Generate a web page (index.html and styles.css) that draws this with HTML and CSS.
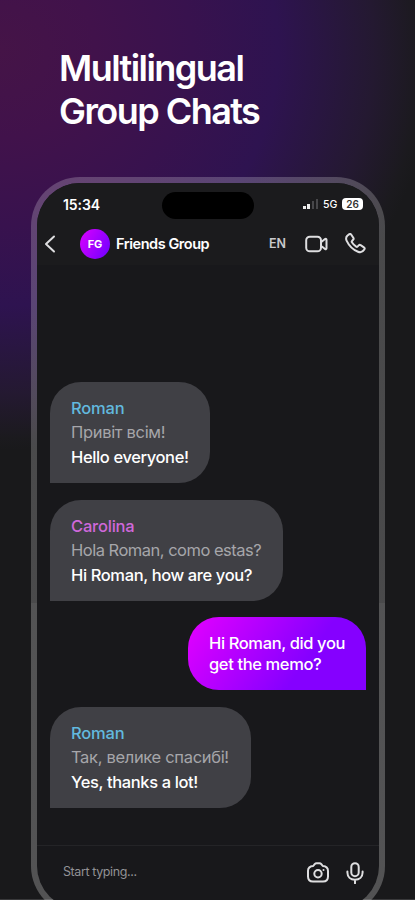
FILE: index.html
```
<!DOCTYPE html>
<html lang="en">
<head>
<meta charset="utf-8">
<title>Multilingual Group Chats</title>
<link rel="stylesheet" href="styles.css">
</head>
<body>
<main class="promo">
  <h1 class="headline">Multilingual<br>Group Chats</h1>
  <section class="phone">
    <div class="screen">
      <header class="top">
        <div class="status">
          <span class="time">15:34</span>
          <span class="island"></span>
          <div class="signals">
            <svg class="bars" width="16" height="11" viewBox="0 0 16 11"><path fill="#eee" d="M0 7h3v3H0zM4 5h3v5H4z"/><path fill="#47474a" d="M9 2h2v8H9zM13 0h2v10h-2z"/></svg>
            <span class="network">5G</span>
            <span class="battery">26</span>
          </div>
        </div>
        <div class="bar">
          <svg class="back" width="12" height="18" viewBox="0 0 12 18"><path d="M10 1.5 2 9l8 7.5"/></svg>
          <span class="avatar">FG</span>
          <span class="title">Friends Group</span>
          <span class="lang">EN</span>
          <svg class="video" width="23" height="18" viewBox="0 0 23 18"><rect x="1.2" y="1.7" width="14.8" height="14.6" rx="3.6"/><path d="M16 7.2 20 4c.8-.6 1.5-.2 1.5.7v8.6c0 .9-.7 1.3-1.5.7l-4-3.200z"/></svg>
          <svg class="call" width="21" height="21" viewBox="0 0 21 21"><path d="M2.300 2.700 4 1.400c.8-.6 1.700-.5 2.300.3l2 3c.5.8.4 1.500-.2 2.100L7 8c-.4.4-.4.8-.1 1.300 1.100 1.800 2.500 3.200 4.300 4.400.5.300.9.300 1.300-.1l1.200-1.200c.6-.6 1.300-.7 2-.2l3.200 2.100c.8.600 1 1.400.4 2.200-1.600 2.700-3.500 3.300-6.300 2.200C8.200 16.900 4 12.700 1.700 7.900.7 5.700.8 4.200 2.300 2.700z"/></svg>
        </div>
      </header>
      <div class="chat">
        <article class="bubble in first">
          <b class="name blue">Roman</b>
          <p class="original cyrillic">Привіт всім!</p>
          <p class="text">Hello everyone!</p>
        </article>
        <article class="bubble in second">
          <b class="name pink">Carolina</b>
          <p class="original">Hola Roman, como estas?</p>
          <p class="text">Hi Roman, how are you?</p>
        </article>
        <article class="bubble out">
          <p class="mine">Hi Roman, did you</p>
          <p class="mine">get the memo?</p>
        </article>
        <article class="bubble in fourth">
          <b class="name blue">Roman</b>
          <p class="original cyrillic">Так, велике спасибі!</p>
          <p class="text">Yes, thanks a lot!</p>
        </article>
      </div>
      <footer class="composer">
        <span class="placeholder">Start typing...</span>
        <svg class="camera" width="24" height="21" viewBox="0 0 24 21"><path d="M7.200 4 8.700 2.100c.5-.6 1-.9 1.800-.9h3c.8 0 1.300.3 1.800.9L16.800 4c2.800.2 5.200 1.700 5.200 5v5.500c0 3.200-1.800 5-5 5H7c-3.200 0-5-1.800-5-5V9c0-3.300 2.400-4.800 5.200-5z"/><circle cx="12" cy="11.800" r="3.700"/><circle class="dot" cx="17.500" cy="8" r="1"/></svg>
        <svg class="mic" width="18" height="22" viewBox="0 0 18 22"><rect x="5.300" y="1.200" width="7.400" height="13" rx="3.700"/><path d="M1.400 9.500v1c0 4.300 3.200 7.200 7.600 7.200s7.600-2.900 7.600-7.200v-1M9 17.700v3.600"/></svg>
      </footer>
    </div>
  </section>
</main>
</body>
</html>
```
FILE: styles.css
```
* { box-sizing: border-box; }
html { background: #19191b; }
body { margin: 0; font-family: Inter, "Liberation Sans", sans-serif; color: #fff; }
svg { display: block; flex: none; fill: none; stroke: #dedee0; stroke-width: 2; stroke-linecap: round; stroke-linejoin: round; }
.bars { stroke: none; }
h1, p { margin: 0; }
.promo {
  height: 900px; overflow: hidden; padding-left: 31px;
  background:
    linear-gradient(#39393b, #39393b) 0 100% / 100% 1px no-repeat,
    radial-gradient(ellipse 435px 400px at 0 50px, #451447 0%, #41124b 22%, #38124e 44%, #2e1350 64%, #241931 86%, #1b1a1e 97%, #19191b 100%);
}
.headline { height: 177px; padding: 47px 0 0 28px; font-size: 36px; font-weight: 600; line-height: 43px; letter-spacing: -1.55px; white-space: nowrap; }
.phone {
  width: 354px; height: 738px; padding: 6px; border-radius: 49px;
  background: linear-gradient(rgba(255,255,255,.21) 0 426px, rgba(255,255,255,.25) 426px);
}
.screen { height: 726px; border-radius: 43px; background: #18181b; overflow: hidden; display: flex; flex-direction: column; }
.top { height: 82px; background: #1b1b1d; }
.status { height: 41px; display: flex; align-items: flex-start; padding-left: 26px; }
.time { width: 99px; padding-top: 13px; font-size: 14px; line-height: 17px; font-weight: 600; letter-spacing: -.1px; }
.island { width: 92px; height: 27px; margin-top: 9px; border-radius: 14px; background: #000; }
.signals { display: flex; align-items: center; height: 14px; margin: 14px 0 0 49px; }
.network { margin-left: 4px; width: 19px; font-size: 10.500px; font-weight: 500; }
.battery { width: 21px; height: 12px; border-radius: 4px; background: #fff; color: #333; font-size: 10px; line-height: 12px; font-weight: 600; text-align: center; }
.bar { height: 39px; display: flex; align-items: center; padding-left: 7px; }
.avatar { width: 30px; height: 30px; margin-left: 24px; border-radius: 50%; background: linear-gradient(120deg, #dc00ff, #7c00ff 85%); font-size: 11px; line-height: 30px; font-weight: 700; text-align: center; }
.title { width: 153px; margin-left: 6px; font-size: 14.500px; font-weight: 600; letter-spacing: -.45px; white-space: nowrap; }
.lang { width: 36px; font-size: 12.500px; font-weight: 600; color: #c9c9cc; }
.call { margin-left: 17px; }
.chat { flex: 1; padding: 117px 13px 0; display: flex; flex-direction: column; align-items: flex-start; }
.bubble { flex: none; border-radius: 31px; white-space: nowrap; }
.in { height: 101px; padding: 14px 0 0 21px; border-bottom-left-radius: 0; background: #404045; margin-bottom: 17px; }
.first { width: 160px; }
.second { width: 233px; margin-bottom: 16px; }
.fourth { width: 201px; }
.out { align-self: flex-end; width: 178px; height: 73px; padding: 16px 0 0 21px; border-bottom-right-radius: 0; margin-bottom: 17px; background: linear-gradient(125deg, #e400ff, #8500ff 65%); }
.name { display: block; font-size: 16.500px; line-height: 24px; font-weight: 500; letter-spacing: -.2px; }
.blue { color: #62b9df; }
.pink { color: #cf68da; }
.original { font-size: 16.500px; line-height: 24px; color: #a6a6aa; letter-spacing: -.5px; }
.cyrillic { letter-spacing: -.32px; }
.text { padding-top: 1px; font-size: 16.500px; line-height: 24px; font-weight: 500; letter-spacing: -.38px; }
.mine { font-size: 16.500px; line-height: 21px; font-weight: 500; letter-spacing: -.38px; }
.composer { flex: none; height: 64px; display: flex; align-items: flex-start; padding: 16px 0 0 26px; border-top: 1px solid #242427; }
.placeholder { width: 243px; padding-top: 1px; font-size: 12.500px; line-height: 18px; color: #929295; letter-spacing: -.4px; }
.dot { fill: #dedee0; stroke: none; }
.mic { margin-left: 16px; }
```
